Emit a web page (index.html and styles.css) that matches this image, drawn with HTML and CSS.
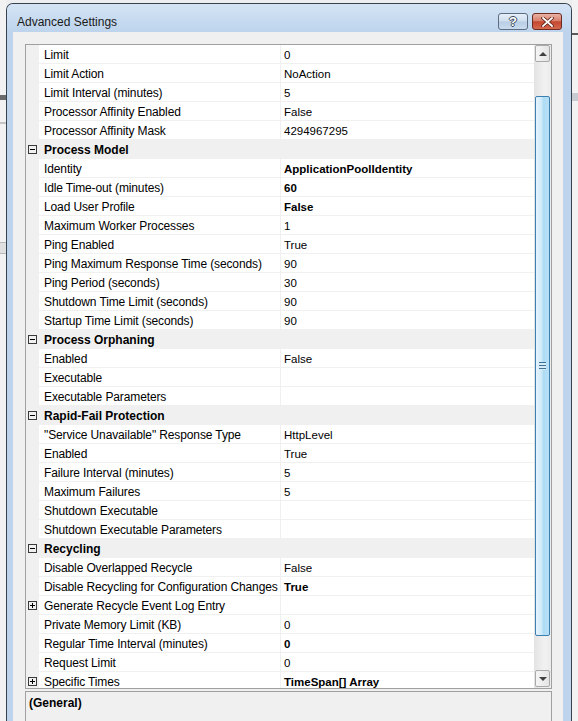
FILE: index.html
```html
<!DOCTYPE html>
<html lang="en">
<head>
    <meta charset="UTF-8">
    <title>Advanced Settings</title>
    <link rel="stylesheet" href="styles.css">
</head>
<body>
    <div class="desk desk-left">
        <div class="band band-dark"></div>
        <div class="band band-line"></div>
        <div class="band band-low"></div>
    </div>

    <div class="dialog">
        <div class="titlebar">
            <div class="title">Advanced Settings</div>
            <div class="caption-btn help">?</div>
            <div class="caption-btn close">
                <svg width="13" height="10" viewBox="0 0 13 10">
                    <path d="M2 1 L11 9 M11 1 L2 9" stroke="#5a1f17" stroke-width="3.4" stroke-linecap="square"/>
                    <path d="M2 1 L11 9 M11 1 L2 9" stroke="#ffffff" stroke-width="1.8" stroke-linecap="square"/>
                </svg>
            </div>
        </div>

        <div class="client">
            <div class="grid">
                <div class="list">
                    <div class="row"><span class="gut"></span><span class="name">Limit</span><span class="val">0</span></div>
                    <div class="row"><span class="gut"></span><span class="name">Limit Action</span><span class="val">NoAction</span></div>
                    <div class="row"><span class="gut"></span><span class="name">Limit Interval (minutes)</span><span class="val">5</span></div>
                    <div class="row"><span class="gut"></span><span class="name">Processor Affinity Enabled</span><span class="val">False</span></div>
                    <div class="row"><span class="gut"></span><span class="name">Processor Affinity Mask</span><span class="val">4294967295</span></div>
                    <div class="row cat"><span class="gut"><i class="box"></i></span><span class="name">Process Model</span></div>
                    <div class="row"><span class="gut"></span><span class="name">Identity</span><span class="val b">ApplicationPoolIdentity</span></div>
                    <div class="row"><span class="gut"></span><span class="name">Idle Time-out (minutes)</span><span class="val b">60</span></div>
                    <div class="row"><span class="gut"></span><span class="name">Load User Profile</span><span class="val b">False</span></div>
                    <div class="row"><span class="gut"></span><span class="name">Maximum Worker Processes</span><span class="val">1</span></div>
                    <div class="row"><span class="gut"></span><span class="name">Ping Enabled</span><span class="val">True</span></div>
                    <div class="row"><span class="gut"></span><span class="name">Ping Maximum Response Time (seconds)</span><span class="val">90</span></div>
                    <div class="row"><span class="gut"></span><span class="name">Ping Period (seconds)</span><span class="val">30</span></div>
                    <div class="row"><span class="gut"></span><span class="name">Shutdown Time Limit (seconds)</span><span class="val">90</span></div>
                    <div class="row"><span class="gut"></span><span class="name">Startup Time Limit (seconds)</span><span class="val">90</span></div>
                    <div class="row cat"><span class="gut"><i class="box"></i></span><span class="name">Process Orphaning</span></div>
                    <div class="row"><span class="gut"></span><span class="name">Enabled</span><span class="val">False</span></div>
                    <div class="row"><span class="gut"></span><span class="name">Executable</span><span class="val"></span></div>
                    <div class="row"><span class="gut"></span><span class="name">Executable Parameters</span><span class="val"></span></div>
                    <div class="row cat"><span class="gut"><i class="box"></i></span><span class="name">Rapid-Fail Protection</span></div>
                    <div class="row"><span class="gut"></span><span class="name">"Service Unavailable" Response Type</span><span class="val">HttpLevel</span></div>
                    <div class="row"><span class="gut"></span><span class="name">Enabled</span><span class="val">True</span></div>
                    <div class="row"><span class="gut"></span><span class="name">Failure Interval (minutes)</span><span class="val">5</span></div>
                    <div class="row"><span class="gut"></span><span class="name">Maximum Failures</span><span class="val">5</span></div>
                    <div class="row"><span class="gut"></span><span class="name">Shutdown Executable</span><span class="val"></span></div>
                    <div class="row"><span class="gut"></span><span class="name">Shutdown Executable Parameters</span><span class="val"></span></div>
                    <div class="row cat"><span class="gut"><i class="box"></i></span><span class="name">Recycling</span></div>
                    <div class="row"><span class="gut"></span><span class="name">Disable Overlapped Recycle</span><span class="val">False</span></div>
                    <div class="row"><span class="gut"></span><span class="name">Disable Recycling for Configuration Changes</span><span class="val b">True</span></div>
                    <div class="row"><span class="gut"><i class="box plus"></i></span><span class="name">Generate Recycle Event Log Entry</span><span class="val"></span></div>
                    <div class="row"><span class="gut"></span><span class="name">Private Memory Limit (KB)</span><span class="val">0</span></div>
                    <div class="row"><span class="gut"></span><span class="name">Regular Time Interval (minutes)</span><span class="val b">0</span></div>
                    <div class="row"><span class="gut"></span><span class="name">Request Limit</span><span class="val">0</span></div>
                    <div class="row"><span class="gut"><i class="box plus"></i></span><span class="name">Specific Times</span><span class="val b">TimeSpan[] Array</span></div>
                </div>
                <div class="vscroll">
                    <div class="sb-btn"><i class="arrow up"></i></div>
                    <div class="thumb"><i class="grip"></i></div>
                    <div class="sb-btn down"><i class="arrow dn"></i></div>
                </div>
            </div>
            <div class="desc">
                <div class="desc-title">(General)</div>
            </div>
        </div>
    </div>

    <div class="desk desk-right">
        <div class="band band-top"></div>
        <div class="band band-mid"></div>
    </div>
</body>
</html>
```

FILE: styles.css
```css
* {
    box-sizing: border-box;
}

body {
    margin: 0;
    width: 578px;
    height: 721px;
    overflow: hidden;
    display: flex;
    background: #eceef0;
    font-family: "Liberation Sans", Arial, sans-serif;
    font-size: 12px;
    color: #000;
}

/* bits of the windows behind the dialog */
.desk {
    width: 6px;
    display: flex;
    flex-direction: column;
    background: #f2f2f2;
}

.band-dark {
    margin-top: 95px;
    height: 5px;
    background: #6a6a6a;
}

.band-line {
    margin-top: 22px;
    height: 2px;
    background: #c4c4c4;
}

.band-low {
    margin-top: 118px;
    height: 12px;
    background: #e0e0e0;
    border-top: 1px solid #b8b8b8;
    border-bottom: 1px solid #b8b8b8;
}

.band-top {
    margin-top: 33px;
    height: 2px;
    background: #5a5a5a;
}

.band-mid {
    margin-top: 58px;
    height: 8px;
    background: #c8ccd2;
}

/* dialog frame */
.dialog {
    width: 566px;
    height: 718px;
    margin-top: 3px;
    display: flex;
    flex-direction: column;
    border: 1px solid #38424f;
    border-bottom: 0;
    border-radius: 7px 7px 0 0;
    background: #bdd4ec;
}

.titlebar {
    height: 28px;
    display: flex;
    align-items: flex-start;
    padding-left: 10px;
    border-radius: 6px 6px 0 0;
    background: linear-gradient(#d4e4f5, #bdd4ec);
}

.title {
    flex: 1;
    margin-top: 11px;
    line-height: 14px;
    color: #1a1a1a;
}

.caption-btn {
    margin-top: 9px;
    height: 17px;
    display: flex;
    align-items: center;
    justify-content: center;
    border: 1px solid #5d6c80;
    border-radius: 3px;
}

.help {
    width: 30px;
    margin-right: 4px;
    background: linear-gradient(#e6eff9 0%, #cfdeee 48%, #b8cde4 52%, #c9dcef 100%);
    font-weight: bold;
    font-size: 13px;
    color: #fff;
    text-shadow: 1px 0 #3b4a5c, -1px 0 #3b4a5c, 0 1px #3b4a5c, 0 -1px #3b4a5c;
}

.close {
    width: 30px;
    margin-right: 9px;
    border-color: #6e2b22;
    background: linear-gradient(#eab2a4 0%, #d8806c 45%, #c5462e 52%, #d46a50 100%);
}

.client {
    flex: 1;
    margin: 0 8px 0 6px;
    padding: 12px 11px 0 12px;
    display: flex;
    flex-direction: column;
    background: #f0f0f0;
}

/* property grid */
.grid {
    height: 645px;
    display: flex;
    border: 1px solid #a0a0a0;
    background: #fff;
}

.list {
    flex: 1;
    overflow: hidden;
}

.row {
    height: 19px;
    display: grid;
    grid-template-columns: 13px 242px 1fr;
}

.gut {
    position: relative;
    background: #f0f0f0;
}

.name {
    padding: 2px 0 0 5px;
    line-height: 16px;
    letter-spacing: -0.12px;
    white-space: nowrap;
    overflow: hidden;
    border-right: 1px solid #f0f0f0;
    border-bottom: 1px solid #f0f0f0;
}

.val {
    padding: 2px 0 0 3px;
    line-height: 16px;
    font-size: 11.5px;
    white-space: nowrap;
    border-bottom: 1px solid #f0f0f0;
}

.b {
    font-weight: bold;
}

.cat {
    background: #f0f0f0;
}

.cat .name {
    grid-column: 2 / 4;
    font-weight: bold;
    letter-spacing: 0;
    border: 0;
}

.box {
    position: absolute;
    left: 2px;
    top: 5px;
    width: 9px;
    height: 9px;
    border: 1px solid #3a3a3a;
}

.box::before {
    content: "";
    position: absolute;
    left: 1px;
    top: 3px;
    width: 5px;
    height: 1px;
    background: #000;
}

.plus::after {
    content: "";
    position: absolute;
    left: 3px;
    top: 1px;
    width: 1px;
    height: 5px;
    background: #000;
}

/* scrollbar */
.vscroll {
    width: 17px;
    display: flex;
    flex-direction: column;
    background: linear-gradient(90deg, #e3e3e3, #f1f1f1 60%, #ebebeb);
}

.sb-btn {
    height: 17px;
    margin: 0 1px;
    display: flex;
    align-items: center;
    justify-content: center;
    border: 1px solid #a9a9a9;
    border-radius: 2px;
    background: linear-gradient(90deg, #f5f5f5, #e4e4e4);
}

.sb-btn.down {
    margin-top: auto;
    margin-bottom: 1px;
}

.arrow {
    width: 0;
    height: 0;
    border-left: 4px solid transparent;
    border-right: 4px solid transparent;
}

.arrow.up {
    border-bottom: 4px solid #404040;
}

.arrow.dn {
    border-top: 4px solid #404040;
}

.thumb {
    height: 540px;
    margin: 34px 1px 0;
    display: flex;
    align-items: center;
    justify-content: center;
    border: 1px solid #3c7fb1;
    border-radius: 2px;
    background: linear-gradient(90deg, #e6f4fc 0%, #cde9f9 45%, #aedcf5 55%, #b8e0f6 100%);
}

.grip {
    width: 7px;
    height: 8px;
    background: repeating-linear-gradient(#3f6f94 0 1px, #d6ecf9 1px 3px);
}

/* description pane */
.desc {
    flex: 1;
    margin-top: 2px;
    padding: 4px 3px 0;
    border: 1px solid #a0a0a0;
    border-bottom: 0;
}

.desc-title {
    line-height: 14px;
    font-weight: bold;
}
```
